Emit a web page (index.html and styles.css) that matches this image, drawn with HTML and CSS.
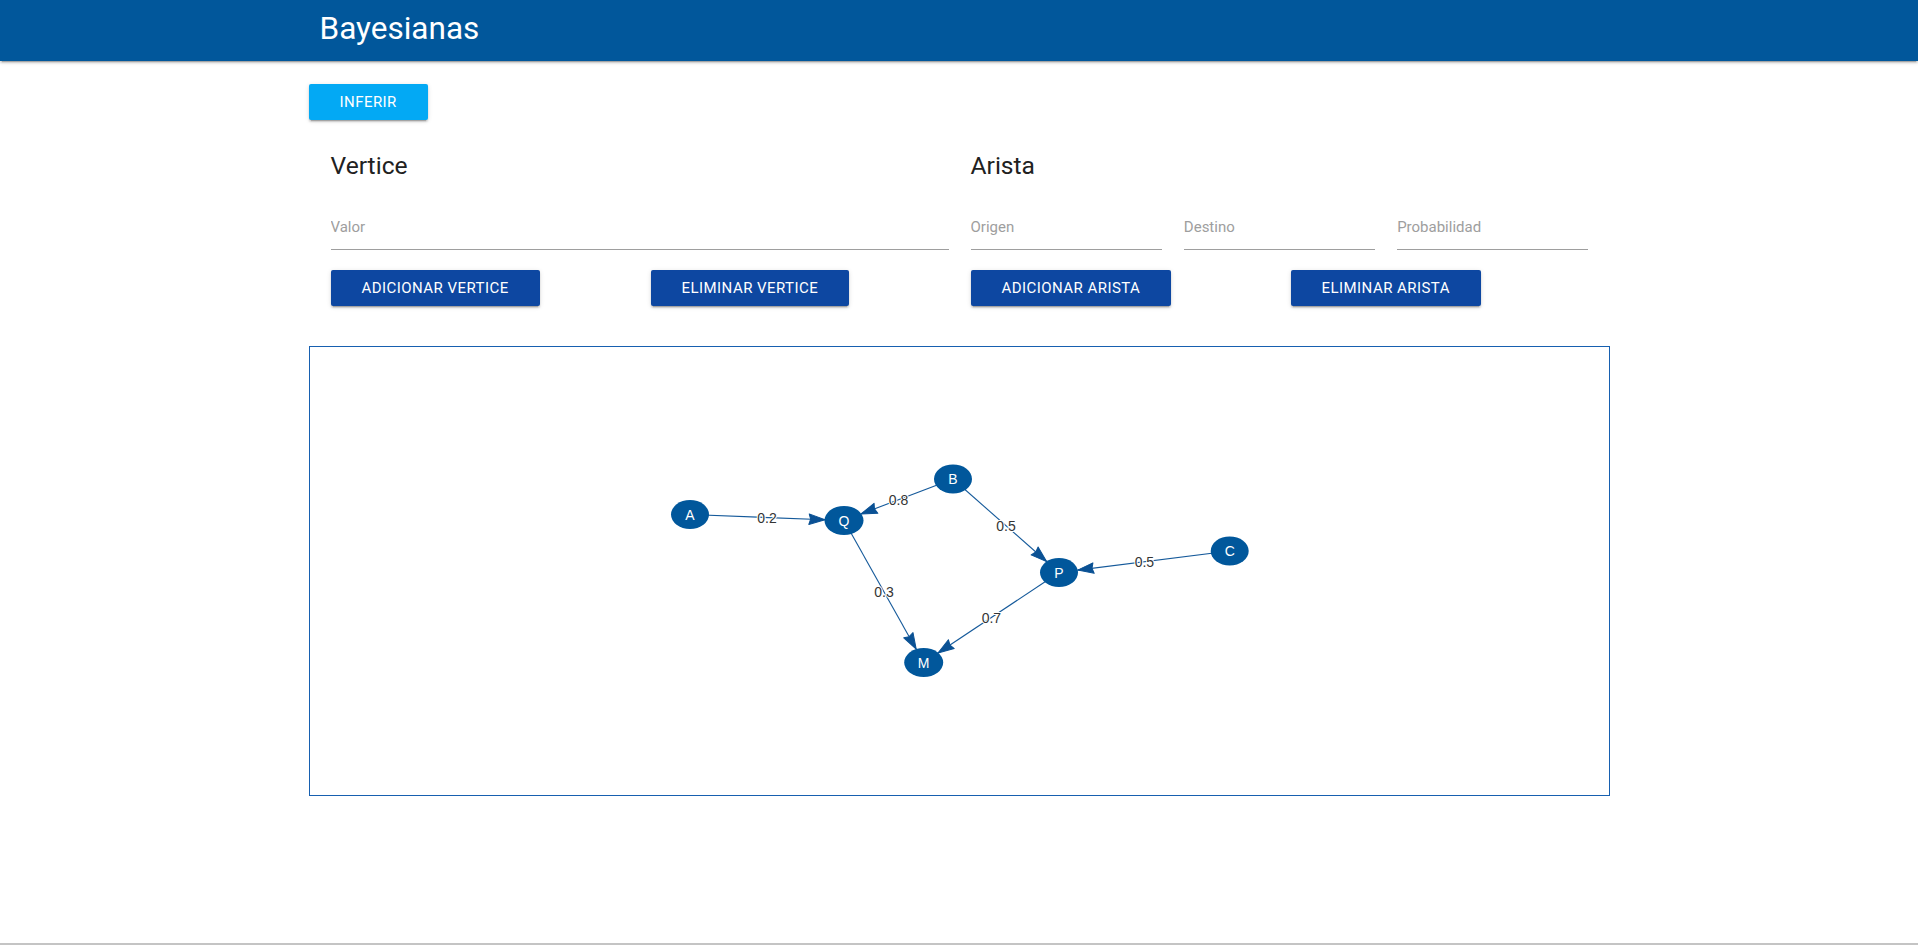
FILE: index.html
```html
<!DOCTYPE html>
<html lang="es">
<head>
<meta charset="utf-8">
<title>Bayesianas</title>
<link rel="stylesheet" href="styles.css">
</head>
<body>
<header class="nav">
  <div class="nav-inner"><span class="brand">Bayesianas</span></div>
</header>
<main class="container">
  <div class="toolbar">
    <button class="btn btn-light">Inferir</button>
  </div>
  <div class="forms">
    <section class="panel">
      <h5 class="panel-title">Vertice</h5>
      <div class="fields fields-one">
        <input class="field" type="text" placeholder="Valor">
      </div>
      <div class="actions">
        <div><button class="btn">Adicionar vertice</button></div>
        <div><button class="btn">Eliminar vertice</button></div>
      </div>
    </section>
    <section class="panel">
      <h5 class="panel-title">Arista</h5>
      <div class="fields fields-three">
        <input class="field" type="text" placeholder="Origen">
        <input class="field" type="text" placeholder="Destino">
        <input class="field" type="text" placeholder="Probabilidad">
      </div>
      <div class="actions">
        <div><button class="btn">Adicionar arista</button></div>
        <div><button class="btn">Eliminar arista</button></div>
      </div>
    </section>
  </div>
  <div class="graph-box">
    <svg class="graph" viewBox="310 347 1299 448" preserveAspectRatio="none">
      <g class="edges">
        <line x1="690" y1="514.5" x2="825" y2="519.8"/>
        <line x1="953" y1="479" x2="861" y2="514"/>
        <line x1="953" y1="479" x2="1046.6" y2="561.5"/>
        <line x1="1229.7" y1="551" x2="1077.7" y2="570.1"/>
        <line x1="844" y1="520.5" x2="916.2" y2="649.2"/>
        <line x1="1059" y1="572.5" x2="938" y2="653"/>
      </g>
      <g class="arrows">
        <path transform="translate(825 519.8) rotate(2.23)" d="M0 0 L-16 5.3 L-14.4 0 L-16 -5.3 Z"/>
        <path transform="translate(861 514) rotate(159.15)" d="M0 0 L-16 5.3 L-14.4 0 L-16 -5.3 Z"/>
        <path transform="translate(1046.6 561.5) rotate(41.41)" d="M0 0 L-16 5.3 L-14.4 0 L-16 -5.3 Z"/>
        <path transform="translate(1077.7 570.1) rotate(172.82)" d="M0 0 L-16 5.3 L-14.4 0 L-16 -5.3 Z"/>
        <path transform="translate(916.2 649.2) rotate(60.69)" d="M0 0 L-16 5.3 L-14.4 0 L-16 -5.3 Z"/>
        <path transform="translate(938 653) rotate(146.37)" d="M0 0 L-16 5.3 L-14.4 0 L-16 -5.3 Z"/>
      </g>
      <g class="edge-labels">
        <text x="767" y="517.5">0.2</text>
        <text x="898.5" y="499.8">0.8</text>
        <text x="1006" y="525.8">0.5</text>
        <text x="1144.4" y="561.8">0.5</text>
        <text x="884" y="591.5">0.3</text>
        <text x="991.4" y="617.5">0.7</text>
      </g>
      <g class="nodes">
        <ellipse cx="690" cy="514.5" rx="19" ry="14.5"/>
        <ellipse cx="844" cy="520.5" rx="19.5" ry="14.5"/>
        <ellipse cx="953" cy="479" rx="19" ry="14.5"/>
        <ellipse cx="1059" cy="572.5" rx="19" ry="14.5"/>
        <ellipse cx="1229.7" cy="551" rx="19" ry="14.5"/>
        <ellipse cx="923.7" cy="662.5" rx="19.5" ry="14.5"/>
      </g>
      <g class="node-labels">
        <text x="690" y="514.5">A</text>
        <text x="844" y="520.5">Q</text>
        <text x="953" y="479">B</text>
        <text x="1059" y="572.5">P</text>
        <text x="1229.7" y="551">C</text>
        <text x="923.7" y="662.5">M</text>
      </g>
    </svg>
  </div>
</main>
<footer class="footer"></footer>
</body>
</html>
```
FILE: styles.css
```css
html, body {
  margin: 0;
  padding: 0;
}

body {
  min-height: 100vh;
  display: flex;
  flex-direction: column;
  font-family: Roboto, "Liberation Sans", sans-serif;
  color: rgba(0, 0, 0, 0.87);
  background: #fff;
}

.nav {
  height: 61px;
  background: #01579b;
  box-shadow: 0 2px 2px 0 rgba(0,0,0,0.14), 0 1px 5px 0 rgba(0,0,0,0.12), 0 3px 1px -2px rgba(0,0,0,0.2);
  position: relative;
  z-index: 1;
}

.nav-inner {
  width: 1301px;
  margin: 0 auto;
  padding-left: 11px;
  box-sizing: border-box;
}

.brand {
  font-size: 31.5px;
  line-height: 57px;
  color: #fff;
  font-weight: 400;
}

.container {
  width: 1301px;
  margin: 0 auto;
  padding-top: 23px;
  flex: 1;
}

.toolbar {
  display: flex;
}

.btn {
  height: 36px;
  padding: 0 31px;
  border: none;
  border-radius: 2px;
  font-family: Roboto, "Liberation Sans", sans-serif;
  font-size: 15px;
  font-weight: 400;
  letter-spacing: 0.45px;
  text-transform: uppercase;
  color: #fff;
  background: #0d47a1;
  box-shadow: 0 2px 2px 0 rgba(0,0,0,0.14), 0 1px 5px 0 rgba(0,0,0,0.12), 0 3px 1px -2px rgba(0,0,0,0.2);
  cursor: pointer;
}

.btn-light {
  background: #03a9f4;
}

.forms {
  display: grid;
  grid-template-columns: 1fr 1fr;
  column-gap: 22px;
  padding: 0 21px 0 22px;
  margin-top: 32px;
}

.panel-title {
  margin: 0;
  font-size: 24.6px;
  line-height: 28px;
  font-weight: 400;
  color: #212121;
}

.fields {
  display: grid;
  column-gap: 22px;
  margin-top: 24px;
}

.fields-one {
  grid-template-columns: 1fr;
}

.fields-three {
  grid-template-columns: 1fr 1fr 1fr;
}

.field {
  display: block;
  width: 100%;
  box-sizing: border-box;
  height: 46px;
  padding: 0;
  margin: 0;
  border: none;
  border-bottom: 1px solid #9e9e9e;
  outline: none;
  background: transparent;
  font-family: Roboto, "Liberation Sans", sans-serif;
  font-size: 15px;
  color: rgba(0,0,0,0.87);
}

.field::placeholder {
  color: #9e9e9e;
}

.actions {
  display: grid;
  grid-template-columns: 1fr 1fr;
  column-gap: 22px;
  margin-top: 20px;
}

.graph-box {
  margin-top: 40px;
  height: 450px;
  box-sizing: border-box;
  border: 1px solid #1760b0;
}

.graph {
  display: block;
  width: 100%;
  height: 100%;
}

.edges line {
  stroke: #14599a;
  stroke-width: 1.1;
}

.arrows path {
  fill: #0a5194;
  stroke: #0a5194;
  stroke-width: 1;
  stroke-linejoin: round;
}

.edge-labels text {
  font-family: "Liberation Sans", Arial, sans-serif;
  font-size: 14px;
  fill: #343434;
  stroke: #fff;
  stroke-width: 2px;
  paint-order: stroke;
  text-anchor: middle;
  dominant-baseline: central;
}

.nodes ellipse {
  fill: #01579b;
}

.node-labels text {
  font-family: "Liberation Sans", Arial, sans-serif;
  font-size: 14px;
  fill: #fff;
  text-anchor: middle;
  dominant-baseline: central;
}

.footer {
  height: 0;
  border-top: 2px solid #c4c4c4;
}
```
